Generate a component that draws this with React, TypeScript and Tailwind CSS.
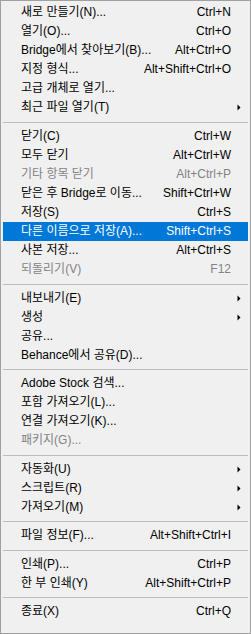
type Item = {
  label: string;
  shortcut?: string;
  disabled?: boolean;
  active?: boolean;
  submenu?: boolean;
};

const sections: { items: Item[]; gap: string }[] = [
  {
    gap: 'h-[10px]',
    items: [
      { label: '새로 만들기(N)...', shortcut: 'Ctrl+N' },
      { label: '열기(O)...', shortcut: 'Ctrl+O' },
      { label: 'Bridge에서 찾아보기(B)...', shortcut: 'Alt+Ctrl+O' },
      { label: '지정 형식...', shortcut: 'Alt+Shift+Ctrl+O' },
      { label: '고급 개체로 열기...' },
      { label: '최근 파일 열기(T)', submenu: true },
    ],
  },
  {
    gap: 'h-[10px]',
    items: [
      { label: '닫기(C)', shortcut: 'Ctrl+W' },
      { label: '모두 닫기', shortcut: 'Alt+Ctrl+W' },
      { label: '기타 항목 닫기', shortcut: 'Alt+Ctrl+P', disabled: true },
      { label: '닫은 후 Bridge로 이동...', shortcut: 'Shift+Ctrl+W' },
      { label: '저장(S)', shortcut: 'Ctrl+S' },
      { label: '다른 이름으로 저장(A)...', shortcut: 'Shift+Ctrl+S', active: true },
      { label: '사본 저장...', shortcut: 'Alt+Ctrl+S' },
      { label: '되돌리기(V)', shortcut: 'F12', disabled: true },
    ],
  },
  {
    gap: 'h-[9px]',
    items: [
      { label: '내보내기(E)', submenu: true },
      { label: '생성', submenu: true },
      { label: '공유...' },
      { label: 'Behance에서 공유(D)...' },
    ],
  },
  {
    gap: 'h-[10px]',
    items: [
      { label: 'Adobe Stock 검색...' },
      { label: '포함 가져오기(L)...' },
      { label: '연결 가져오기(K)...' },
      { label: '패키지(G)...', disabled: true },
    ],
  },
  {
    gap: 'h-[9px]',
    items: [
      { label: '자동화(U)', submenu: true },
      { label: '스크립트(R)', submenu: true },
      { label: '가져오기(M)', submenu: true },
    ],
  },
  {
    gap: 'h-[10px]',
    items: [{ label: '파일 정보(F)...', shortcut: 'Alt+Shift+Ctrl+I' }],
  },
  {
    gap: 'h-[9px]',
    items: [
      { label: '인쇄(P)...', shortcut: 'Ctrl+P' },
      { label: '한 부 인쇄(Y)', shortcut: 'Alt+Shift+Ctrl+P' },
    ],
  },
  {
    gap: 'h-[9px]',
    items: [{ label: '종료(X)', shortcut: 'Ctrl+Q' }],
  },
];

function Arrow() {
  return (
    <svg width="4" height="7" viewBox="0 0 4 7" className="absolute right-[7px] top-[6px]">
      <polygon points="0.5,0.5 3.5,3.5 0.5,6.5" fill="#000" />
    </svg>
  );
}

function MenuRow({ item }: { item: Item }) {
  const color = item.active ? 'bg-[#0078d7] text-white' : item.disabled ? 'text-[#838383]' : 'text-black';
  return (
    <div className={`relative flex h-[19px] items-center justify-between pl-[18px] pr-[17px] ${color}`}>
      <span className="whitespace-nowrap">{item.label}</span>
      {item.shortcut && <span className="whitespace-nowrap">{item.shortcut}</span>}
      {item.submenu && <Arrow />}
    </div>
  );
}

export default function App() {
  return (
    <div
      className="h-[634px] w-[251px] border border-[#a0a0a0] bg-[#f0f0f0] px-[2px] pt-[2px] text-[12px] leading-[19px]"
      style={{ fontFamily: '"Liberation Sans", "Noto Sans CJK KR", sans-serif' }}
    >
      {sections.map((section, i) => (
        <div key={i}>
          {i > 0 && (
            <div className={`flex items-center ${sections[i - 1].gap}`}>
              <div className="h-px w-full bg-[#bdbdbd]" />
            </div>
          )}
          {section.items.map((item) => (
            <MenuRow key={item.label} item={item} />
          ))}
        </div>
      ))}
    </div>
  );
}
